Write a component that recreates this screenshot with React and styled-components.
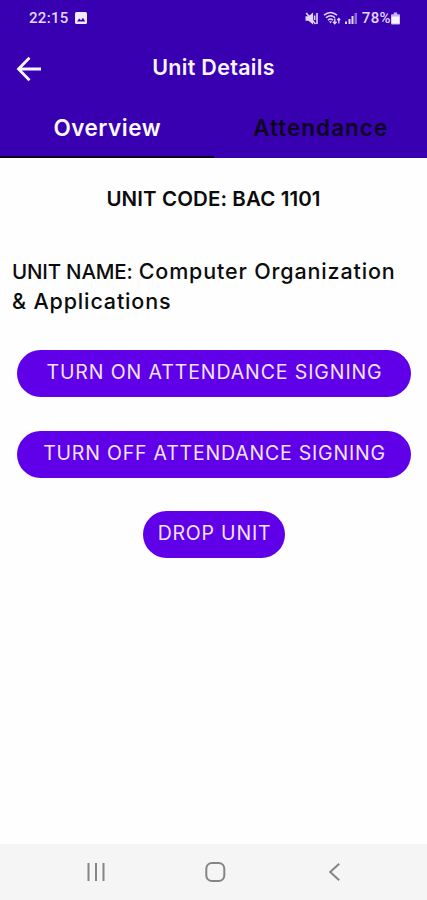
import React from "react";
import styled, { createGlobalStyle } from "styled-components";

const GlobalStyle = createGlobalStyle`
  * { box-sizing: border-box; }
  body { margin: 0; background: #fff; font-family: Inter, "Open Sans", sans-serif; }
`;

const Screen = styled.div`
  width: 100%;
  height: 900px;
  display: flex;
  flex-direction: column;
  background: #fefefe;
  overflow: hidden;
`;

const StatusBar = styled.header`
  height: 36px;
  flex: none;
  display: flex;
  align-items: center;
  justify-content: space-between;
  padding: 0 27px 0 29px;
  background: #3900b1;
  color: #e2d8fb;
  font: 500 15px/36px Roboto, sans-serif;
`;

const StatusGroup = styled.div`
  display: flex;
  align-items: center;
  height: 36px;
  gap: ${(p) => p.$gap || 0}px;
`;

const StatusText = styled.span`
  letter-spacing: ${(p) => p.$spacing || 0}px;
`;

const AppBar = styled.div`
  height: 67px;
  flex: none;
  display: grid;
  grid-template-columns: 56px 1fr 56px;
  background: #3900b1;
  color: #f8f5ff;
`;

const BackButton = styled.button`
  border: 0;
  padding: 20px 0 0 16px;
  background: none;
  color: inherit;
  display: flex;
  align-items: flex-start;
`;

const Title = styled.h1`
  margin: 0;
  padding-top: 15px;
  text-align: center;
  white-space: nowrap;
  font-size: 21.5px;
  line-height: 32px;
  font-weight: 600;
  letter-spacing: 0.3px;
`;

const Tabs = styled.nav`
  height: 55px;
  flex: none;
  display: grid;
  grid-template-columns: 1fr 1fr;
  background: #3900b1;
`;

const Tab = styled.button`
  border: 0;
  border-bottom: 2px solid ${(p) => (p.$active ? "#0b0028" : "transparent")};
  padding: 0 0 4px 1px;
  background: none;
  color: ${(p) => (p.$active ? "#fbf9ff" : "#0c0420")};
  font: 600 22.5px/32px Inter, sans-serif;
  letter-spacing: ${(p) => p.$spacing}px;
`;

const Content = styled.main`
  flex: 1;
  display: flex;
  flex-direction: column;
  align-items: center;
`;

const UnitCode = styled.h2`
  margin: 26px 0 0;
  color: #0c0c0c;
  font-size: 20.5px;
  line-height: 30px;
  font-weight: 600;
  white-space: nowrap;
  letter-spacing: 0.1px;
`;

const UnitName = styled.p`
  margin: 42px 0 0;
  padding-left: 12px;
  align-self: stretch;
  color: #0c0c0c;
  font-size: 21.5px;
  line-height: 30px;
  font-weight: 500;
  white-space: nowrap;
  letter-spacing: 0.85px;
`;

const Line = styled.span`
  display: block;
`;

const Label = styled.span`
  margin-right: 1px;
  font-size: 20.5px;
  line-height: 1;
  letter-spacing: -0.2px;
`;

const Actions = styled.div`
  display: flex;
  flex-direction: column;
  align-items: center;
  gap: 33.5px;
  margin-top: 34px;
`;

const PillButton = styled.button`
  width: ${(p) => p.$width}px;
  height: 47px;
  border: 0;
  border-radius: 24px;
  padding: 0 0 3px 2px;
  background: #6000e9;
  color: #f0e4ff;
  font: 400 19.5px/30px Inter, sans-serif;
  letter-spacing: ${(p) => p.$spacing}px;
  white-space: nowrap;
`;

const SystemNav = styled.footer`
  height: 56px;
  flex: none;
  display: grid;
  grid-template-columns: 24px 22px 20px;
  column-gap: 96px;
  align-items: center;
  padding: 0 0 1px 84px;
  background: #f5f5f5;
  color: #858585;
`;

const ImageIcon = () => (
  <svg width="12" height="12" viewBox="0 0 12 12">
    <rect width="12" height="12" rx="1.5" fill="#f0eaff" />
    <path d="M2 9.5 4.2 6.5 6 8.3 8 5.8 10.2 9.5Z" fill="#3900b1" />
  </svg>
);

const MuteIcon = () => (
  <svg width="14" height="13" viewBox="0 0 14 13" fill="none" stroke="currentColor">
    <path d="M.5 4.2h3L8 .5v12L3.5 8.8h-3Z" fill="currentColor" stroke="none" />
    <path d="M1.2 1 10.5 12M9.6 3.5v4.5M12 1v11" strokeWidth="1.6" />
  </svg>
);

const WifiIcon = () => (
  <svg width="18" height="14" viewBox="0 0 18 14" fill="none" stroke="currentColor" strokeWidth="1.5">
    <path d="M1 4.2Q7.5-1.2 14 4.2M3 6.7Q7.5 2.8 12 6.7M5 9.2Q7.5 6.7 10 9.2" />
    <path d="M6 10.2 7.5 12.4 9 10.2Z" fill="currentColor" stroke="none" />
    <path d="M11.8 7.5V13M10 10.8l1.8 2 1.8-2M15.8 12.5v-5M14.4 9.2l1.4-1.7 1.4 1.7" strokeWidth="1.3" />
  </svg>
);

const SignalIcon = () => (
  <svg width="13" height="12" viewBox="0 0 13 12" fill="currentColor">
    <path d="M0 9.5h2V12H0ZM3.5 7h2v5h-2ZM6.5 4h2v8h-2Z" />
    <path d="M9.5 1h2.5v11H9.5Z" opacity=".5" />
  </svg>
);

const BatteryIcon = () => (
  <svg width="9" height="13" viewBox="0 0 9 13">
    <path d="M2.8.5h3.4v1.8H8q1 0 1 1v8.2q0 1-1 1H1q-1 0-1-1V3.3q0-1 1-1h1.8Z" fill="#c6b4f4" />
    <path d="M.7 4.5h7.6v7H.7Z" fill="#f7f2ff" />
  </svg>
);

const BackArrow = () => (
  <svg width="26" height="26" viewBox="0 0 26 26" fill="none" stroke="currentColor" strokeWidth="2.8">
    <path d="M25 13H2.5M13.5 1.8 2.5 13l11 11.2" />
  </svg>
);

const RecentsIcon = () => (
  <svg width="24" height="22" viewBox="0 0 24 22" stroke="currentColor" strokeWidth="2">
    <path d="M4.5 2v18M12 2v18M19.5 2v18" />
  </svg>
);

const HomeIcon = () => (
  <svg width="22" height="22" viewBox="0 0 22 22" fill="none" stroke="currentColor" strokeWidth="2">
    <rect x="2.3" y="2" width="18" height="18" rx="5.5" />
  </svg>
);

const NavBackIcon = () => (
  <svg width="20" height="22" viewBox="0 0 20 22" fill="none" stroke="currentColor" strokeWidth="2">
    <path d="M17.2 2.8 8.2 11l9 8.2" />
  </svg>
);

export default function App() {
  return (
    <Screen>
      <GlobalStyle />
      <StatusBar>
        <StatusGroup $gap={6}>
          <StatusText $spacing={0.3}>22:15</StatusText>
          <ImageIcon />
        </StatusGroup>
        <StatusGroup $gap={4}>
          <MuteIcon />
          <WifiIcon />
          <SignalIcon />
          <StatusGroup>
            <StatusText $spacing={0.4}>78%</StatusText>
            <BatteryIcon />
          </StatusGroup>
        </StatusGroup>
      </StatusBar>
      <AppBar>
        <BackButton aria-label="Back"><BackArrow /></BackButton>
        <Title>Unit Details</Title>
      </AppBar>
      <Tabs>
        <Tab $active $spacing={0.5}>Overview</Tab>
        <Tab $spacing={1}>Attendance</Tab>
      </Tabs>
      <Content>
        <UnitCode>UNIT CODE: BAC 1101</UnitCode>
        <UnitName>
          <Line><Label>UNIT NAME: </Label>Computer Organization</Line>
          <Line>&amp; Applications</Line>
        </UnitName>
        <Actions>
          <PillButton $width={394} $spacing={0.9}>TURN ON ATTENDANCE SIGNING</PillButton>
          <PillButton $width={394} $spacing={0.8}>TURN OFF ATTENDANCE SIGNING</PillButton>
          <PillButton $width={142} $spacing={0.8}>DROP UNIT</PillButton>
        </Actions>
      </Content>
      <SystemNav>
        <RecentsIcon />
        <HomeIcon />
        <NavBackIcon />
      </SystemNav>
    </Screen>
  );
}
